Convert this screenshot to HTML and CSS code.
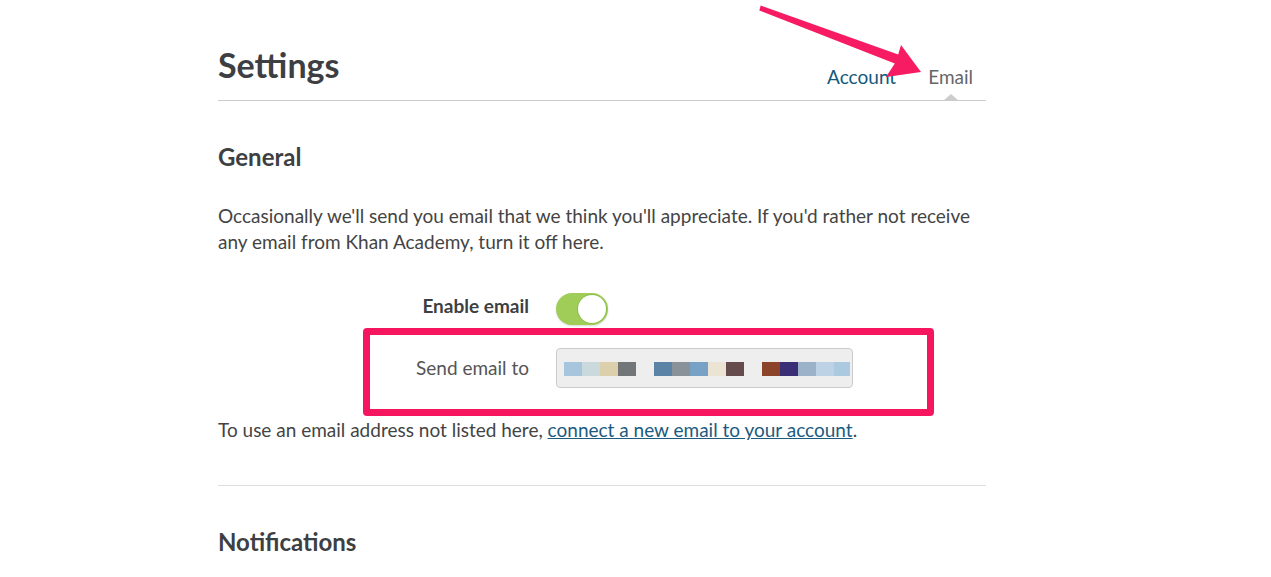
FILE: index.html
```html
<!DOCTYPE html>
<html lang="en">
<head>
    <meta charset="UTF-8">
    <meta name="viewport" content="width=device-width, initial-scale=1.0">
    <title>Settings - Email</title>
    <link rel="stylesheet" href="styles.css">
</head>
<body>
    <div class="page">
        <header class="settings-head">
            <h1>Settings</h1>
            <nav class="tabs">
                <a href="#" class="tab">Account</a>
                <a href="#" class="tab active">Email</a>
            </nav>
        </header>

        <section class="general">
            <h2>General</h2>
            <p class="intro">Occasionally we'll send you email that we think you'll appreciate. If you'd rather not receive any email from Khan Academy, turn it off here.</p>

            <div class="form-grid">
                <label class="lbl strong" for="enable">Enable email</label>
                <div class="toggle" id="enable" role="switch" aria-checked="true"><span class="knob"></span></div>

                <label class="lbl" for="sendto">Send email to</label>
                <div class="email-box" id="sendto">
                    <span class="px" style="background:#a7c6dd"></span>
                    <span class="px" style="background:#c9d9dc"></span>
                    <span class="px" style="background:#dccfab"></span>
                    <span class="px" style="background:#737679"></span>
                    <span class="px blank"></span>
                    <span class="px" style="background:#5b83a6"></span>
                    <span class="px" style="background:#8a9299"></span>
                    <span class="px" style="background:#78a1c6"></span>
                    <span class="px" style="background:#ebe3d3"></span>
                    <span class="px" style="background:#664b4c"></span>
                    <span class="px blank"></span>
                    <span class="px" style="background:#8b4329"></span>
                    <span class="px" style="background:#3a2f77"></span>
                    <span class="px" style="background:#9cb2c9"></span>
                    <span class="px" style="background:#bdd3e5"></span>
                    <span class="px" style="background:#abc9df"></span>
                </div>
            </div>

            <p class="note">To use an email address not listed here, <a href="#">connect a new email to your account</a>.</p>
        </section>

        <hr class="divider">

        <section class="notifications">
            <h2>Notifications</h2>
        </section>
    </div>

    <!-- annotation overlays -->
    <div class="callout-box"></div>
    <svg class="callout-arrow" width="1271" height="100" viewBox="0 0 1271 100">
        <polygon points="760.7,5.6 898.2,54.5 901,45 921,72 886,77 894.8,63.5 759.3,10.4" fill="#f61b63"/>
    </svg>
</body>
</html>
```

FILE: styles.css
```css
body {
    margin: 0;
    font-family: Lato, "Open Sans", sans-serif;
    color: #444;
    background: #fff;
}

.page {
    width: 768px;
    margin-left: 218px;
}

.settings-head {
    display: flex;
    justify-content: space-between;
    align-items: flex-end;
    height: 101px;
    box-sizing: border-box;
    border-bottom: 1px solid #ccc;
    position: relative;
}

.settings-head h1 {
    margin: 0 0 15px;
    font-size: 34px;
    line-height: 40px;
    font-weight: 700;
    color: #3d3f42;
}

.tabs {
    display: flex;
    gap: 32px;
    padding: 0 13px 11px 0;
}

.tab {
    font-size: 19px;
    line-height: 24px;
    color: #14587d;
    text-decoration: none;
    position: relative;
}

.tab.active {
    color: #666;
}

.tab.active::after {
    content: "";
    position: absolute;
    left: 50%;
    bottom: -12px;
    margin-left: -8px;
    border-left: 8px solid transparent;
    border-right: 8px solid transparent;
    border-bottom: 7px solid #ccc;
}

h2 {
    margin: 0;
    font-size: 24px;
    line-height: 30px;
    font-weight: 700;
    color: #3d3f42;
}

.general h2 {
    margin-top: 41px;
}

.intro, .note {
    font-size: 19px;
    line-height: 26px;
    margin: 0;
}

.intro {
    margin-top: 31px;
}

.form-grid {
    display: grid;
    grid-template-columns: 311px auto;
    column-gap: 27px;
    row-gap: 23px;
    align-items: center;
    justify-items: start;
    margin-top: 38px;
}

.lbl {
    justify-self: end;
    font-size: 19px;
    color: #555;
    padding-bottom: 2px;
}

.lbl.strong {
    font-weight: 700;
    color: #3d3f42;
    padding-bottom: 8px;
}

.toggle {
    width: 52px;
    height: 32px;
    border-radius: 16px;
    background: #9fcd58;
    display: flex;
    align-items: center;
    justify-content: flex-end;
    padding: 0 2px;
    box-sizing: border-box;
    box-shadow: 0 1px 2px rgba(0, 0, 0, 0.15);
}

.knob {
    width: 28px;
    height: 28px;
    border-radius: 50%;
    background: #fff;
    box-shadow: 0 0 0 1px #8cbf48;
}

.email-box {
    width: 297px;
    height: 40px;
    box-sizing: border-box;
    background: #eee;
    border: 1px solid #ccc;
    border-radius: 4px;
    display: flex;
    align-items: center;
    padding: 1px 0 0 7px;
}

.px {
    width: 18px;
    height: 14px;
}

.px.blank {
    background: transparent;
}

.px:last-child {
    width: 16px;
}

.note {
    margin-top: 29px;
}

.note a {
    color: #1b5b7f;
    text-decoration: underline;
}

.divider {
    border: 0;
    border-top: 1px solid #ddd;
    margin: 42px 0 0;
}

.notifications h2 {
    margin-top: 41px;
}

.callout-box {
    position: absolute;
    left: 363px;
    top: 328px;
    width: 571px;
    height: 88px;
    box-sizing: border-box;
    border: 7px solid #f5165f;
    border-radius: 4px;
}

.callout-arrow {
    position: absolute;
    left: 0;
    top: 0;
}
```
